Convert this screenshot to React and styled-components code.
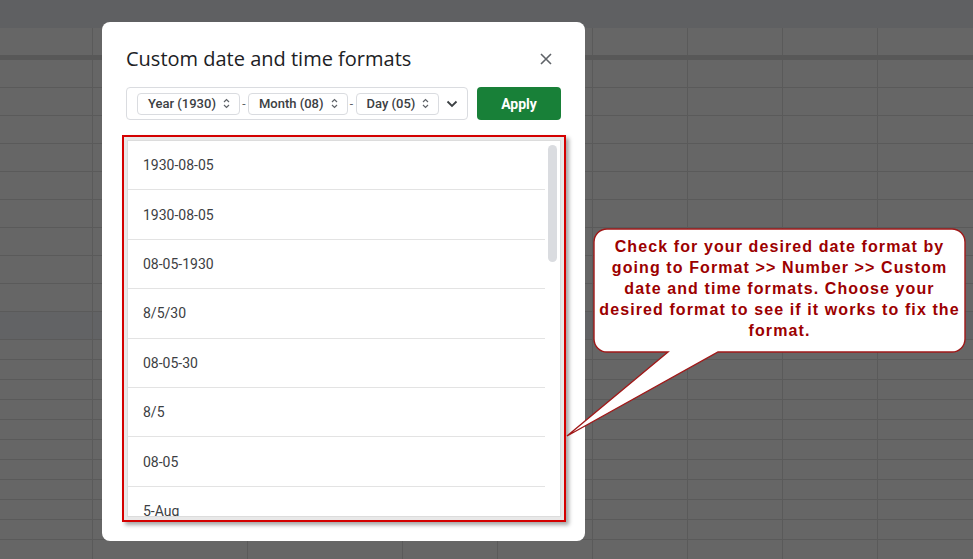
import styled, { createGlobalStyle } from "styled-components";

const GlobalStyle = createGlobalStyle`
  html, body {
    margin: 0;
    padding: 0;
    background: #666666;
  }
  body {
    font-family: Roboto, "Liberation Sans", Arial, sans-serif;
  }
  * {
    box-sizing: border-box;
  }
`;

const columns = [93, 155, 155, 95, 95, 95, 95, 95, 95];

const rows = [
  ...Array(9).fill({ height: 28 }),
  { height: 28, shade: true },
  ...Array(11).fill({ height: 20 }),
];

const Page = styled.div`
  position: relative;
  width: 973px;
  height: 559px;
  overflow: hidden;
  background: #666666;
`;

const Sheet = styled.div`
  display: flex;
  flex-direction: column;
`;

const SheetStrip = styled.div`
  height: 28px;
  background: #5f6062;
`;

const SheetThick = styled.div`
  height: 5px;
  background: #585858;
`;

const SheetRow = styled.div`
  display: flex;
  height: ${({ h }) => h}px;
  flex: none;
  background: ${({ shade }) => (shade ? "#626365" : "#666666")};
  border-bottom: ${({ noLine }) => (noLine ? "none" : "1px solid #5a5a5a")};
`;

const SheetCell = styled.div`
  flex: none;
  width: ${({ w }) => w}px;
  border-right: ${({ last }) => (last ? "none" : "1px solid #5a5a5a")};
`;

const Overlay = styled.div`
  position: absolute;
  inset: 0;
  padding: 22px 0 0 102px;
`;

const Modal = styled.div`
  width: 483px;
  height: 519px;
  background: #fff;
  border-radius: 8px;
  padding: 23px 24px 19px;
  display: flex;
  flex-direction: column;
`;

const Header = styled.div`
  display: flex;
  align-items: center;
  justify-content: space-between;
  height: 28px;
`;

const Title = styled.h2`
  margin: 0;
  font-family: "Open Sans", Roboto, sans-serif;
  font-size: 20px;
  font-weight: 400;
  color: #202124;
  line-height: 28px;
`;

const CloseButton = styled.button`
  width: 24px;
  height: 24px;
  margin-right: 3px;
  border: none;
  background: none;
  padding: 0;
  display: flex;
  align-items: center;
  justify-content: center;
  color: #5f6368;
`;

const Toolbar = styled.div`
  display: flex;
  gap: 9px;
  height: 33px;
  margin-top: 14px;
`;

const FormatBox = styled.div`
  flex: 1;
  display: flex;
  align-items: center;
  border: 1px solid #dadce0;
  border-radius: 4px;
  padding: 0 3px 0 10px;
`;

const Chip = styled.div`
  height: 22px;
  display: flex;
  align-items: center;
  gap: 7px;
  padding: 0 9px 0 10px;
  border: 1px solid #dadce0;
  border-radius: 4px;
  font-size: 13px;
  font-weight: 500;
  color: #3c4043;
  white-space: nowrap;
`;

const Dash = styled.span`
  width: 8px;
  text-align: center;
  font-size: 12px;
  color: #5f6368;
`;

const DropButton = styled.button`
  margin-left: auto;
  width: 24px;
  height: 24px;
  border: none;
  background: none;
  padding: 0;
  display: flex;
  align-items: center;
  justify-content: center;
  color: #3c4043;
`;

const ApplyButton = styled.button`
  width: 84px;
  border: none;
  border-radius: 4px;
  background: #188038;
  color: #fff;
  font-family: Roboto, sans-serif;
  font-size: 14px;
  font-weight: 700;
`;

const RedFrame = styled.div`
  margin: 15px 0 0 -4px;
  width: 444px;
  height: 387px;
  border: 2px solid #d40000;
  padding: 3px;
  background: #e8e8e8;
  box-shadow: 3px 3px 4px rgba(0, 0, 0, 0.35);
`;

const ListPanel = styled.div`
  height: 100%;
  display: flex;
  background: #fff;
  border: 1px solid #dcdcdc;
  overflow: hidden;
`;

const Items = styled.div`
  flex: 1;
  overflow: hidden;
`;

const Item = styled.div`
  height: 49.4px;
  display: flex;
  align-items: center;
  padding-left: 15px;
  border-bottom: 1px solid #e3e3e3;
  font-size: 14px;
  color: #3c4043;
`;

const Gutter = styled.div`
  width: 15px;
  flex: none;
`;

const Thumb = styled.div`
  margin: 4px 0 0 3px;
  width: 9px;
  height: 117px;
  border-radius: 5px;
  background: #dadce0;
`;

const Callout = styled.div`
  position: absolute;
  left: 560px;
  top: 220px;
  width: 413px;
  height: 225px;

  svg {
    position: absolute;
    inset: 0;
  }
`;

const CalloutText = styled.p`
  position: relative;
  margin: 0 0 0 34px;
  width: 371px;
  padding-top: 16px;
  text-align: center;
  font-family: "Liberation Sans", Arial, sans-serif;
  font-size: 16px;
  font-weight: 700;
  letter-spacing: 1.1px;
  line-height: 21px;
  color: #9c0000;
`;

const SpinIcon = () => (
  <svg width="7" height="11" viewBox="0 0 7 11" fill="none">
    <path d="M1 4 L3.5 1.5 L6 4 M1 7 L3.5 9.5 L6 7" stroke="#5f6368" strokeWidth="1.2" />
  </svg>
);

const formats = [
  "1930-08-05",
  "1930-08-05",
  "08-05-1930",
  "8/5/30",
  "08-05-30",
  "8/5",
  "08-05",
  "5-Aug",
];

const App = () => {
  return (
    <Page>
      <GlobalStyle />
      <Sheet>
        <SheetStrip />
        <SheetRow h={27} noLine>
          {columns.map((w, i) => (
            <SheetCell key={i} w={w} last={i === columns.length - 1} />
          ))}
        </SheetRow>
        <SheetThick />
        {rows.map((r, ri) => (
          <SheetRow key={ri} h={r.height} shade={r.shade}>
            {columns.map((w, i) => (
              <SheetCell key={i} w={w} last={i === columns.length - 1} />
            ))}
          </SheetRow>
        ))}
      </Sheet>

      <Overlay>
        <Modal>
          <Header>
            <Title>Custom date and time formats</Title>
            <CloseButton aria-label="Close">
              <svg width="12" height="12" viewBox="0 0 12 12">
                <path d="M1 1 L11 11 M11 1 L1 11" stroke="#5f6368" strokeWidth="1.6" />
              </svg>
            </CloseButton>
          </Header>
          <Toolbar>
            <FormatBox>
              <Chip>
                Year (1930) <SpinIcon />
              </Chip>
              <Dash>-</Dash>
              <Chip>
                Month (08) <SpinIcon />
              </Chip>
              <Dash>-</Dash>
              <Chip>
                Day (05) <SpinIcon />
              </Chip>
              <DropButton aria-label="More">
                <svg width="12" height="8" viewBox="0 0 12 8" fill="none">
                  <path d="M1.5 1.5 L6 6 L10.5 1.5" stroke="#3c4043" strokeWidth="1.8" />
                </svg>
              </DropButton>
            </FormatBox>
            <ApplyButton>Apply</ApplyButton>
          </Toolbar>
          <RedFrame>
            <ListPanel>
              <Items>
                {formats.map((f, i) => (
                  <Item key={i}>{f}</Item>
                ))}
              </Items>
              <Gutter>
                <Thumb />
              </Gutter>
            </ListPanel>
          </RedFrame>
        </Modal>
      </Overlay>

      <Callout>
        <svg width="413" height="225" viewBox="0 0 413 225">
          <path
            d="M47 9 H392 A13 13 0 0 1 405 22 V119 A13 13 0 0 1 392 132 H158 L7 216 L108 132 H47 A13 13 0 0 1 34 119 V22 A13 13 0 0 1 47 9 Z"
            fill="#fff"
            stroke="#a01818"
            strokeWidth="1.4"
          />
        </svg>
        <CalloutText>
          Check for your desired date format by
          <br />
          going to Format &gt;&gt; Number &gt;&gt; Custom
          <br />
          date and time formats. Choose your
          <br />
          desired format to see if it works to fix the
          <br />
          format.
        </CalloutText>
      </Callout>
    </Page>
  );
};

export default App;
